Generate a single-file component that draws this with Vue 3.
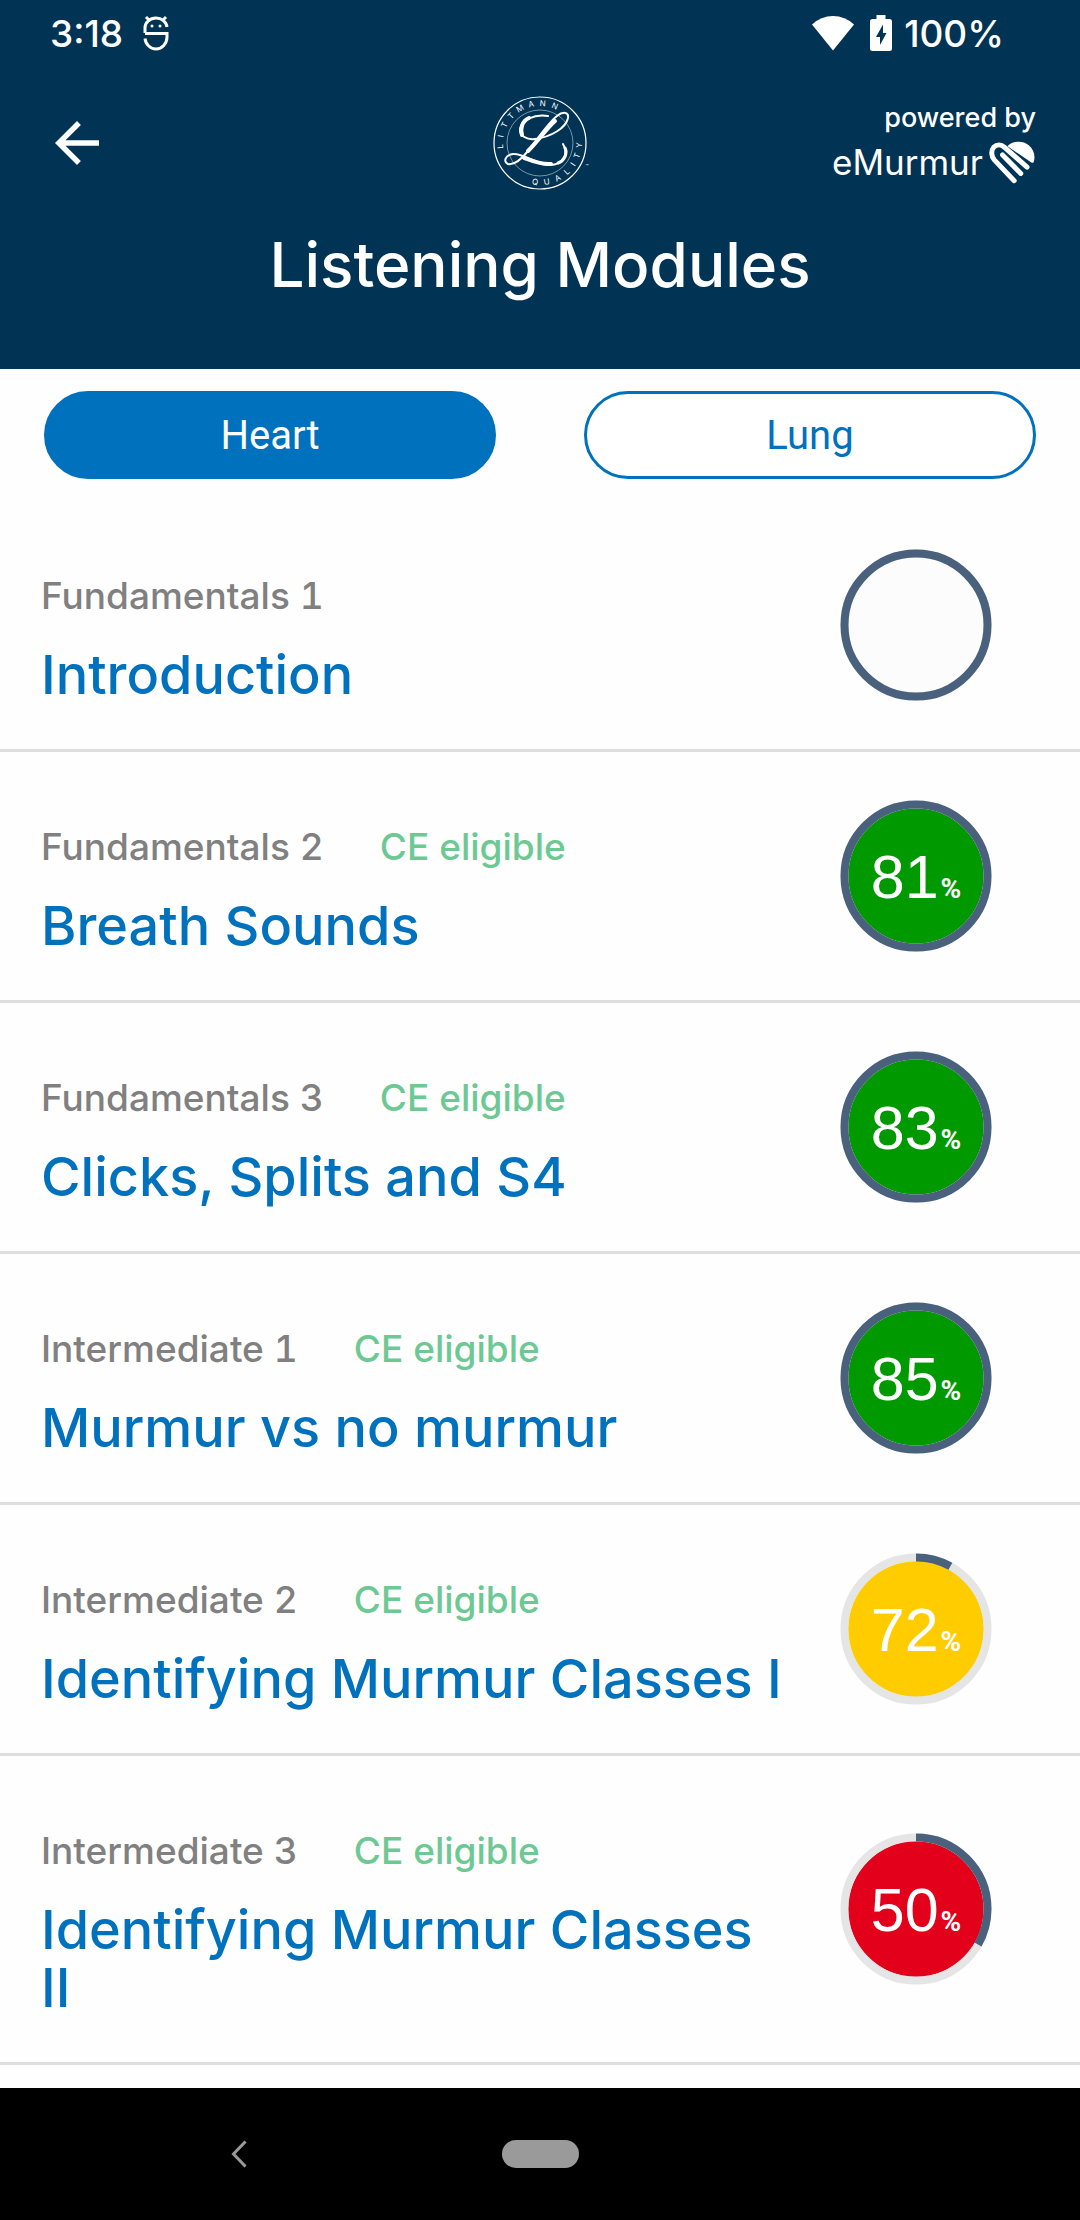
<script setup>
import { ref } from 'vue';

const tabs = ['Heart', 'Lung'];
const activeTab = ref('Heart');

// progress: filled part of the ring, 0 - 1
const modules = [
  { level: 'Fundamentals 1', title: 'Introduction', ce: false, score: null, status: 'empty', progress: 1 },
  { level: 'Fundamentals 2', title: 'Breath Sounds', ce: true, score: 81, status: 'good', progress: 1 },
  { level: 'Fundamentals 3', title: 'Clicks, Splits and S4', ce: true, score: 83, status: 'good', progress: 1 },
  { level: 'Intermediate 1', title: 'Murmur vs no murmur', ce: true, score: 85, status: 'good', progress: 1 },
  { level: 'Intermediate 2', title: 'Identifying Murmur Classes I', ce: true, score: 72, status: 'medium', progress: 0.08 },
  { level: 'Intermediate 3', title: 'Identifying Murmur Classes II', ce: true, score: 50, status: 'poor', progress: 0.333 },
];

// letters around the seal, angle in degrees from 12 o'clock
const sealTop = [
  ['L', -95], ['I', -80], ['T', -63], ['T', -47], ['M', -30], ['A', -13], ['N', 4], ['N', 22],
];
const sealBottom = [
  ['Q', 7], ['U', -10], ['A', -27], ['L', -43], ['I', -57], ['T', -71], ['Y', -87],
];
</script>

<template>
  <div class="screen">
    <header class="header">
      <div class="status-bar">
        <div class="status-left">
          <span>3:18</span>
          <svg class="notify-icon" viewBox="0 0 26 36" fill="none" stroke="#fff" stroke-width="3">
            <path d="M2 18V13A11 10 0 0 1 13 3A11 10 0 0 1 24 12M2 18.500H24V22A11 12 0 0 1 13 34A11 12 0 0 1 2 23.500" />
            <path d="M3 2L7 6M23 2L19 6" stroke-width="3" />
            <circle cx="9" cy="11" r="1.500" fill="#fff" stroke="none" />
            <circle cx="17" cy="11" r="1.500" fill="#fff" stroke="none" />
          </svg>
        </div>
        <div class="status-right">
          <svg class="wifi-icon" viewBox="0 0 42 36">
            <path fill="#fff" d="M0 9.500Q9 1 21 1Q33 1 42 9.500L21 35.500Z" />
          </svg>
          <svg class="battery-icon" viewBox="0 0 22 36">
            <path fill="#fff" fill-rule="evenodd" d="M6.500 0H15.500V4H19.500Q22 4 22 6.500V33.500Q22 36 19.500 36H2.500Q0 36 0 33.500V6.500Q0 4 2.500 4H6.500ZM13 9.500L6 22H10V30L16.500 18H13Z" />
          </svg>
          <span>100%</span>
        </div>
      </div>

      <div class="toolbar">
        <button class="back" aria-label="Back">
          <svg viewBox="0 0 24 24">
            <path fill="#fff" d="M20 11H7.830l5.590-5.590L12 4l-8 8 8 8 1.410-1.410L7.830 13H20v-2z" />
          </svg>
        </button>

        <svg class="seal" viewBox="-50 -50 100 100" fill="none" stroke="#fff">
          <circle r="46" stroke-width="1.200" />
          <circle r="33" stroke-width="0.800" opacity="0.600" />
          <g class="seal-text">
            <text
              v-for="([char, angle], i) in sealTop"
              :key="'t' + i"
              y="-37"
              :transform="`rotate(${angle})`">{{ char }}</text>
            <text
              v-for="([char, angle], i) in sealBottom"
              :key="'b' + i"
              y="42"
              :transform="`rotate(${angle})`">{{ char }}</text>
            <text class="seal-tm" x="47" y="25">™</text>
          </g>
          <!-- script flourish -->
          <g stroke-linecap="round" stroke-linejoin="round">
            <path stroke-width="2" d="M8 -27C-6 -29 -19 -23 -20 -14C-20.500 -7 -13 -3 -5 -4C11 -6 26 -15 28 -25C29 -31 23 -32 17 -27C7 -19 -3 -3 -12 8C-20 18 -27 22 -32 21C-37 19 -35 12 -27 11C-17 10 -4 21 10 22C23 22 29 11 23 1" />
            <path stroke-width="4" d="M-11 -25C-18 -22 -20 -14 -18 -8M15 -22C7 -15 -3 -1 -12 8M-16 15C-8 18 2 22 11 21" />
            <path stroke-width="3" d="M25 5C28 11 24 18 18 20" />
          </g>
        </svg>

        <div class="powered">
          <span class="powered-by">powered by</span>
          <span class="brand">
            eMurmur
            <svg class="brand-heart" viewBox="22 20 142 130" fill="none" stroke="#fff" stroke-width="15" stroke-linecap="round" stroke-linejoin="round">
              <path d="M98 140L38 77C28 65 28 49 36 39C46 29 59 30 69 39L137 99" />
              <path d="M63 62L118 118" />
              <path fill="#fff" stroke="none" d="M79 34C94 20 125 18 142 33C158 46 163 66 157 84Q154 88 149 84L79 37Q77 35 79 34Z" />
            </svg>
          </span>
        </div>
      </div>

      <h1 class="page-title">Listening Modules</h1>
    </header>

    <nav class="tabs">
      <button
        v-for="tab in tabs"
        :key="tab"
        :class="['tab', { active: tab === activeTab }]"
        @click="activeTab = tab">{{ tab }}</button>
    </nav>

    <main class="module-list">
      <section v-for="item in modules" :key="item.level" class="module">
        <div class="module-info">
          <div class="module-meta">
            <span>{{ item.level }}</span>
            <span v-if="item.ce" class="ce">CE eligible</span>
          </div>
          <h2 class="module-title">{{ item.title }}</h2>
        </div>
        <div :class="['score', item.status]">
          <svg class="ring" viewBox="0 0 152 152">
            <circle class="disc" cx="76" cy="76" r="68" />
            <circle class="track" cx="76" cy="76" r="71.500" />
            <circle
              class="bar"
              cx="76"
              cy="76"
              r="71.500"
              pathLength="1000"
              :stroke-dasharray="`${item.progress * 1000} ${1000 - item.progress * 1000}`"
              transform="rotate(-90 76 76)" />
          </svg>
          <div v-if="item.score !== null" class="score-label">
            <span>{{ item.score }}</span><span class="percent">%</span>
          </div>
        </div>
      </section>
    </main>

    <footer class="system-nav">
      <button class="nav-back" aria-label="System back">
        <svg viewBox="0 0 16 28" fill="none" stroke="#9a9a9a" stroke-width="3">
          <path d="M14.500 1.500L2.500 14L14.500 26.500" />
        </svg>
      </button>
      <button class="nav-home" aria-label="Home"></button>
    </footer>
  </div>
</template>

<style>
body {
  margin: 0;
  background: #fff;
}
</style>

<style scoped>
.screen {
  display: flex;
  flex-direction: column;
  min-height: 100vh;
  font-family: Inter, "Liberation Sans", sans-serif;
  background: #fefefe;
}

button {
  padding: 0;
  border: none;
  background: none;
  cursor: pointer;
}

svg {
  display: block;
}

.header {
  background: #003354;
  color: #fff;
  padding-bottom: 60px;
}

.status-bar {
  display: flex;
  justify-content: space-between;
  align-items: center;
  height: 66px;
  padding: 0 76px 0 50px;
  font-size: 37px;
  font-weight: 500;
}

.status-left,
.status-right {
  display: flex;
  align-items: center;
}

.status-left {
  gap: 20px;
}

.status-right {
  gap: 12px;
}

.notify-icon {
  width: 26px;
  height: 36px;
}

.wifi-icon {
  width: 42px;
  height: 36px;
  margin-right: 4px;
}

.battery-icon {
  width: 22px;
  height: 36px;
}

.toolbar {
  display: grid;
  grid-template-columns: 1fr auto 1fr;
  align-items: center;
  height: 154px;
  padding: 0 44px;
}

.back {
  width: 66px;
  height: 66px;
}

.seal {
  width: 100px;
  height: 100px;
}

.seal-text {
  fill: #fff;
  stroke: none;
  font-size: 8px;
  text-anchor: middle;
}

.seal-tm {
  font-size: 5px;
}

.powered {
  display: flex;
  flex-direction: column;
  align-items: flex-end;
}

.powered-by {
  font-size: 27px;
  font-weight: 500;
  line-height: 38px;
}

.brand {
  display: flex;
  align-items: center;
  gap: 6px;
  font-size: 35px;
  line-height: 50px;
}

.brand-heart {
  width: 47px;
  height: 43px;
}

.page-title {
  margin: 0;
  font-size: 62px;
  font-weight: 500;
  line-height: 89px;
  text-align: center;
}

.tabs {
  display: flex;
  gap: 88px;
  padding: 22px 44px;
}

.tab {
  flex: 1;
  height: 88px;
  border: 3px solid #0071bc;
  border-radius: 44px;
  background: #fff;
  color: #0071bc;
  font-family: Roboto, sans-serif;
  font-size: 40px;
}

.tab.active {
  background: #0071bc;
  color: #fff;
}

.module-list {
  flex: 1;
}

.module {
  display: flex;
  align-items: center;
  gap: 44px;
  padding-right: 88px;
  border-bottom: 3px solid #dedede;
}

.module-info {
  flex: 1;
  padding: 71px 0 45px 41px;
}

.module-meta {
  display: flex;
  gap: 56px;
  margin-bottom: 26px;
  color: #808080;
  font-size: 37px;
  font-weight: 500;
  line-height: 48px;
  font-variant-numeric: tabular-nums;
}

.ce {
  color: #6dc993;
}

.module-title {
  margin: 0;
  color: #0071bc;
  font-size: 54px;
  font-weight: 500;
  line-height: 58px;
}

.score {
  display: grid;
  place-items: center;
  flex: none;
}

.ring,
.score-label {
  grid-area: 1 / 1;
}

.ring {
  width: 152px;
  height: 152px;
}

.disc {
  fill: #fcfcfc;
}

.good .disc {
  fill: #009a00;
}

.medium .disc {
  fill: #ffcc00;
}

.poor .disc {
  fill: #e2001a;
}

.track,
.bar {
  fill: none;
  stroke: #e5e5e5;
  stroke-width: 8;
}

.bar {
  stroke: #4a617d;
}

.score-label {
  display: flex;
  align-items: baseline;
  gap: 2px;
  padding-top: 14px;
  color: #fff;
  font-family: "Liberation Sans", sans-serif;
  font-size: 61px;
  line-height: 70px;
}

.percent {
  font-family: Roboto, sans-serif;
  font-size: 28px;
  font-weight: 700;
}

.system-nav {
  display: grid;
  grid-template-columns: 1fr auto 1fr;
  align-items: center;
  height: 132px;
  background: #000;
}

.nav-back {
  justify-self: center;
  width: 16px;
  height: 28px;
  margin-right: 24px;
}

.nav-home {
  width: 77px;
  height: 28px;
  border-radius: 14px;
  background: #9a9a9a;
}
</style>
